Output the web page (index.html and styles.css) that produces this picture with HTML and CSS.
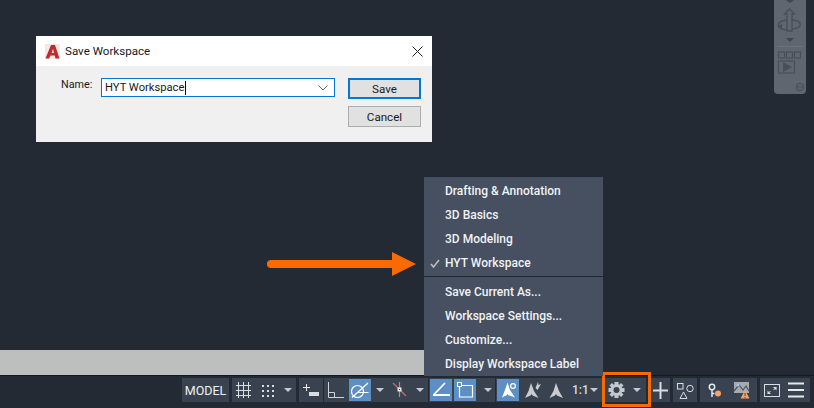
FILE: index.html
```html
<!DOCTYPE html>
<html lang="en">
<head>
<meta charset="utf-8">
<title>Save Workspace</title>
<link rel="stylesheet" href="styles.css">
</head>
<body>
<main class="canvas">
  <div class="strip"></div>

  <section class="dialog">
    <header class="dialog-title">
      <svg class="app-logo" width="15" height="15" viewBox="0 0 15 15"><rect width="15" height="15" fill="#f7e6e4"/><path d="M.5 14.500 L6 1 H10 L14.500 14.500 H10.500 L9.700 11.500 H5.500 L4 14.500Z" fill="#b92c30"/><path d="M6.500 9 H9.200 L8 4.800Z" fill="#eec9c6"/></svg>
      <span class="dialog-name">Save Workspace</span>
      <svg class="close" width="11" height="11" viewBox="0 0 11 11"><path d="M.5 .5 L10.500 10.500 M10.500 .5 L.5 10.500" stroke="#222" stroke-width="1" fill="none"/></svg>
    </header>
    <div class="dialog-body">
      <label class="name-label">Name:</label>
      <div class="combo">
        <span class="combo-text">HYT Workspace</span><span class="caret"></span>
        <svg class="combo-arrow" width="10" height="6" viewBox="0 0 10 6"><path d="M.5 .5 L5 5 L9.500 .5" stroke="#666" fill="none"/></svg>
      </div>
      <div class="dialog-buttons">
        <button class="btn btn-default">Save</button>
        <button class="btn">Cancel</button>
      </div>
    </div>
  </section>

  <svg class="pointer" width="150" height="26" viewBox="0 0 150 26"><path d="M5 9 H126 V1 L150 13 L126 25 V17 H5 A4 4 0 0 1 5 9Z" fill="#f96a03"/></svg>

  <nav class="menu">
    <ul class="menu-list">
      <li>Drafting &amp; Annotation</li>
      <li>3D Basics</li>
      <li>3D Modeling</li>
      <li class="checked"><svg class="check" width="10" height="9" viewBox="0 0 10 9"><path d="M1 5 L3.500 8 L9 1" stroke="#b9bec6" stroke-width="1.600" fill="none"/></svg>HYT Workspace</li>
    </ul>
    <ul class="menu-list menu-list-lower">
      <li>Save Current As...</li>
      <li>Workspace Settings...</li>
      <li>Customize...</li>
      <li>Display Workspace Label</li>
    </ul>
  </nav>

  <aside class="navbar">
    <svg width="32" height="94" viewBox="0 0 32 94">
      <path d="M12 0 H20 L16 3Z" fill="#3f4650"/>
      <g fill="none" stroke="#484f59" stroke-width="1.300">
        <path d="M13 31 V14 H10.500 L15.500 9 L20.500 14 H18 V31Z"/>
        <path d="M13 20 C2 21 1 29 13 30 M18 20 C29 21 29 28 18 29"/>
      </g>
      <path d="M8 24 V30 L3.500 26Z" fill="#484f59"/>
      <path d="M12 38 H20 L16 42Z" fill="#3f4650"/>
      <path d="M3 46.500 H29" stroke="#6b727c"/>
      <g fill="none" stroke="#484f59" stroke-width="1.200">
        <rect x="4.500" y="52" width="6" height="6"/>
        <rect x="12.500" y="52" width="6" height="6"/>
        <rect x="20.500" y="52" width="6" height="6"/>
        <rect x="4.500" y="61" width="16" height="12"/>
      </g>
      <path d="M9 62 L18 67 L9 72Z" fill="#484f59"/>
      <circle cx="26" cy="87" r="3.500" fill="none" stroke="#484f59" stroke-width="1.200"/>
      <path d="M23 87 H29" stroke="#484f59"/>
    </svg>
  </aside>
</main>

<footer class="statusbar">
  <div class="group g-model"><span class="model">MODEL</span></div>
  <div class="group g-grid">
    <svg width="64" height="24" viewBox="0 0 64 24">
      <path d="M4 7.500 H19 M4 12.500 H19 M4 17.500 H19 M6.500 4 V20 M11.500 4 V20 M16.500 4 V20" stroke="#d9dde2" fill="none"/>
      <g fill="#d9dde2"><rect x="30" y="7" width="2" height="2"/><rect x="35" y="7" width="2" height="2"/><rect x="40" y="7" width="2" height="2"/><rect x="30" y="12" width="2" height="2"/><rect x="35" y="12" width="2" height="2"/><rect x="40" y="12" width="2" height="2"/><rect x="30" y="17" width="2" height="2"/><rect x="35" y="17" width="2" height="2"/><rect x="40" y="17" width="2" height="2"/></g>
      <path d="M52 10 H60 L56 14Z" fill="#c6cad0"/>
    </svg>
  </div>
  <div class="group g-snap">
    <svg width="24" height="24" viewBox="0 0 24 24"><path d="M4 9.500 H11 M7.500 6 V13" stroke="#e6e9ec" fill="none"/><rect x="10" y="14" width="10" height="4" fill="#d9dde2"/></svg>
  </div>
  <div class="group g-polar">
    <svg width="25" height="24" viewBox="0 0 25 24"><path d="M4.500 4 V19.500 H20 M4.500 14.500 H10.500 V19.500" stroke="#d0d4d9" fill="none"/></svg>
    <span class="toggle on"><svg width="22" height="22" viewBox="0 0 22 22"><circle cx="8.500" cy="12.500" r="6" fill="none" stroke="#fff" stroke-width="1.200"/><path d="M3 18.500 L19 4 M8.500 13.500 H19.500" stroke="#fff" fill="none" stroke-width="1.200"/></svg></span>
    <svg width="15" height="24" viewBox="0 0 15 24"><path d="M5 10 H13 L9 14Z" fill="#c6cad0"/></svg>
    <svg width="24" height="24" viewBox="0 0 24 24"><path d="M7 5 L20 18" stroke="#cf6a6a" stroke-width="1.200" fill="none"/><path d="M13.500 4 V19" stroke="#63b878" stroke-width="1.200" fill="none"/><rect x="11.500" y="9.500" width="4" height="4" fill="#e6e9ec"/><rect x="13" y="11" width="1" height="1" fill="#39424f"/></svg>
    <svg width="18" height="24" viewBox="0 0 18 24"><path d="M6 10 H14 L10 14Z" fill="#c6cad0"/></svg>
  </div>
  <div class="group g-iso">
    <span class="toggle on"><svg width="22" height="22" viewBox="0 0 22 22"><path d="M3 16 H20 M3.500 16 L15 4" stroke="#fff" fill="none" stroke-width="1.800"/></svg></span>
    <span class="toggle on"><svg width="22" height="22" viewBox="0 0 22 22"><path d="M8 6.500 H18.500 V18 H5.500 V8" stroke="#fff" fill="none" stroke-width="1.200"/><rect x="3.500" y="3.500" width="4" height="4" fill="#5d8fc4" stroke="#fff"/></svg></span>
    <svg width="20" height="24" viewBox="0 0 20 24"><path d="M6 10 H14 L10 14Z" fill="#c6cad0"/></svg>
  </div>
  <div class="group g-anno">
    <span class="toggle on"><svg width="22" height="22" viewBox="0 0 22 22"><path d="M10.500 3.500 L13 11 L18 18.500 L11 16 L10.500 15 L10 16 L5 18.500 L8 11Z" fill="#fff"/><circle cx="16" cy="7" r="2.400" fill="none" stroke="#fff" stroke-width="1.200"/></svg></span>
    <svg width="26" height="24" viewBox="0 0 26 24"><path d="M12 5 L15 13 L19.500 20 L13.500 17.500 L12.500 16 L11.500 17.500 L6 20 L9.500 13Z" fill="#c8ccd1"/><path d="M16.500 10 L19 4 L19.500 7 L22 6 L18.500 12Z" fill="#c8ccd1"/></svg>
    <svg width="24" height="24" viewBox="0 0 24 24"><path d="M11 5 L14 13 L18 20 L12 17.500 L11 16 L10 17.500 L4.500 20 L8.500 13Z" fill="#c8ccd1"/></svg>
    <span class="scale">1:1</span>
    <svg width="12" height="24" viewBox="0 0 12 24"><path d="M1 10 H9 L5 14Z" fill="#c6cad0"/></svg>
  </div>
  <div class="group g-gear">
    <svg width="42" height="24" viewBox="0 0 42 24">
      <g fill="#c4c8cd"><path d="M9.500 4 H13.500 V7 H9.500Z"/><path d="M9.500 17 H13.500 V20 H9.500Z"/><path d="M3.500 10 H6.500 V14 H3.500Z"/><path d="M16.500 10 H19.500 V14 H16.500Z"/><path d="M4.500 7.500 L7 5 L9 7 L6.500 9.500Z"/><path d="M16 5 L18.500 7.500 L16.500 9.500 L14 7Z"/><path d="M4.500 16.500 L6.500 14.500 L9 17 L7 19Z"/><path d="M14 17 L16.500 14.500 L18.500 16.500 L16 19Z"/></g>
      <circle cx="11.500" cy="12" r="4.500" fill="none" stroke="#c4c8cd" stroke-width="3"/>
      <path d="M28 10 H36 L32 14Z" fill="#c6cad0"/>
    </svg>
  </div>
  <div class="group g-plus">
    <svg width="19" height="24" viewBox="0 0 19 24"><path d="M9.500 4 V21 M2 12.500 H17" stroke="#d9dde2" stroke-width="2" fill="none"/></svg>
  </div>
  <div class="group g-shapes">
    <svg width="24" height="24" viewBox="0 0 24 24"><rect x="4.500" y="5.500" width="5.500" height="5.500" fill="none" stroke="#d9dde2"/><circle cx="17" cy="10.500" r="3.200" fill="none" stroke="#d9dde2"/><path d="M10.500 14 L14 20.500 H7Z" fill="none" stroke="#d9dde2"/></svg>
  </div>
  <div class="group g-warn">
    <svg width="57" height="24" viewBox="0 0 57 24">
      <circle cx="12" cy="9" r="2.700" fill="none" stroke="#e6e9ec" stroke-width="1.500"/>
      <path d="M12 12 V19 M12 15.500 H14.500" stroke="#e6e9ec" stroke-width="1.500" fill="none"/>
      <circle cx="18" cy="15.500" r="3" fill="#f4a26d"/>
      <rect x="34" y="4" width="15" height="11" fill="#a7abb0"/>
      <path d="M34 13 L39 7 L43 12 L46 8 L49 13" stroke="#4d545e" stroke-width="1.200" fill="none"/>
      <circle cx="38" cy="7" r="1.500" fill="#9cc7e8"/>
      <path d="M45 12 L49.500 20.500 H40.500Z" fill="#f4a26d"/>
      <path d="M45 15 V18 M45 19 V20" stroke="#6b3b1c" fill="none"/>
    </svg>
  </div>
  <div class="group g-end">
    <svg width="50" height="24" viewBox="0 0 50 24">
      <rect x="4.500" y="6.500" width="15" height="12" fill="none" stroke="#d9dde2"/>
      <path d="M8 15.500 L10.500 13 M16 9.500 L13.500 12" stroke="#d9dde2" fill="none"/>
      <path d="M7.500 12.500 V16 H11Z M16.500 12.500 V9 H13Z" fill="#d9dde2"/>
      <path d="M28 5.500 H44 M28 12 H44 M28 18.500 H44" stroke="#e6e9ec" stroke-width="2" fill="none"/>
    </svg>
  </div>
  <div class="highlight"></div>
</footer>
</body>
</html>
```

FILE: styles.css
```css
* { box-sizing: border-box; }
html, body { margin: 0; height: 100%; }
body {
  width: 814px;
  height: 408px;
  overflow: hidden;
  background: #232a33;
  font-family: "Open Sans", "Liberation Sans", sans-serif;
  display: flex;
  flex-direction: column;
}
.canvas { position: relative; height: 375px; flex: none; }
.strip {
  position: absolute;
  left: 0; top: 350px;
  width: 424px; height: 25px;
  background: #bdbebe;
}

/* dialog */
.dialog {
  position: absolute;
  left: 36px; top: 36px;
  width: 396px; height: 106px;
  background: #f0f0f0;
  font-family: Roboto, "Liberation Sans", sans-serif;
  color: #1a1a1a;
  display: flex;
  flex-direction: column;
}
.dialog-title {
  height: 30px;
  background: #fff;
  display: flex;
  align-items: center;
  padding: 0 9px;
  font-size: 11.600px;
  gap: 5px;
}
.dialog-name { flex: 1; }
.dialog-body {
  flex: 1;
  display: flex;
  padding: 11px 11px 0 25px;
  align-items: flex-start;
  font-size: 11.200px;
}
.name-label { width: 40px; margin-top: 1px; font-size: 10.800px; }
.combo {
  width: 234px; height: 19px;
  border: 1px solid #0078d7;
  background: #fff;
  display: flex;
  align-items: center;
  padding: 0 5px 0 3px;
  margin-top: 1px;
}
.caret { width: 1px; height: 14px; background: #000; margin-left: 1px; }
.combo-arrow { margin-left: auto; margin-right: 1px; }
.dialog-buttons {
  margin-left: 13px;
  width: 73px;
  display: flex;
  flex-direction: column;
  gap: 7px;
  margin-top: 1px;
}
.btn {
  width: 73px; height: 21px;
  padding: 0;
  background: #e1e1e1;
  border: 1px solid #adadad;
  font: 11.600px Roboto, "Liberation Sans", sans-serif;
  color: #1a1a1a;
}
.btn-default { border: 2px solid #0078d7; }

/* arrow + menu */
.pointer { position: absolute; left: 266px; top: 251px; }
.menu {
  position: absolute;
  left: 424px; top: 177px;
  width: 179px; height: 199px;
  background: #465061;
  color: #f0f2f4;
  font-family: Roboto, "Open Sans", sans-serif;
  font-size: 12px;
  font-weight: 500;
  z-index: 2;
}
.menu-list { list-style: none; margin: 0; padding: 2px 0 0; }
.menu-list li {
  height: 24px;
  line-height: 24px;
  padding-left: 21px;
  position: relative;
  white-space: nowrap;
}
.check { position: absolute; left: 6px; top: 8px; }
.menu-list-lower {
  margin-top: 1px;
  padding-top: 3px;
  border-top: 1px solid #22272e;
}

/* navigation bar */
.navbar {
  position: absolute;
  left: 774px; top: 0;
  width: 32px; height: 94px;
  background: #5f6670;
  border-radius: 0 0 4px 4px;
}
.navbar svg { display: block; }

/* status bar */
.statusbar {
  position: relative;
  height: 33px;
  flex: none;
  border-top: 1px solid #15191e;
  padding: 2px 0 0 182px;
  display: flex;
  align-items: flex-start;
}
.group {
  height: 24px;
  background: #39424f;
  display: flex;
  align-items: center;
  flex: none;
}
.group svg { display: block; flex: none; }
.g-model { width: 47px; justify-content: center; }
.model { font: 12.500px Roboto, sans-serif; color: #eef1f4; }
.g-grid { width: 64px; margin-left: 3px; }
.g-snap { width: 24px; margin-left: 3px; }
.g-polar { width: 104px; margin-left: 1px; }
.g-iso { width: 66px; margin-left: 1px; padding-left: 1px; gap: 2px; }
.g-anno { width: 107px; margin-left: 1px; padding-left: 1px; }
.g-gear { width: 41px; margin-left: 2px; }
.g-plus { width: 19px; margin-left: 5px; }
.g-shapes { width: 24px; margin-left: 3px; }
.g-warn { width: 57px; margin-left: 3px; }
.g-end { width: 50px; margin-left: 3px; }
.toggle {
  width: 22px; height: 22px;
  background: #5d8fc4;
  flex: none;
}
.scale { font: 500 12px Roboto, sans-serif; color: #d5dce4; margin-left: 3px; width: 17px; }
.highlight {
  position: absolute;
  left: 602px; top: -4px;
  width: 49px; height: 35px;
  border: 3px solid #f96a03;
}
```
